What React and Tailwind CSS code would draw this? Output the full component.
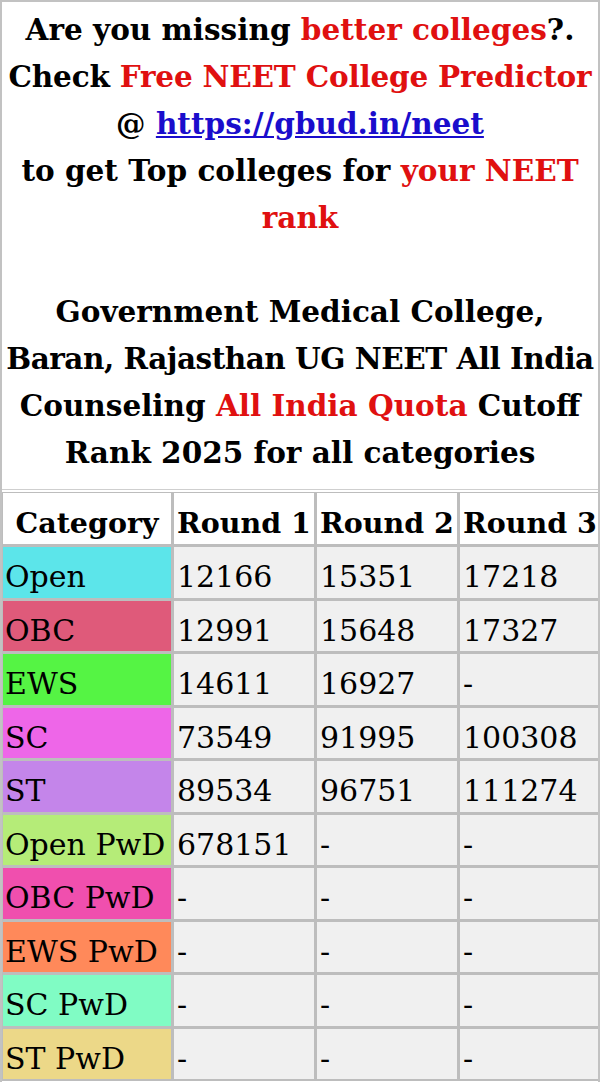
import React from "react";

const rows = [
  ["Open", "bg-[#5ce5ea]", "12166", "15351", "17218"],
  ["OBC", "bg-[#df5a7a]", "12991", "15648", "17327"],
  ["EWS", "bg-[#55f444]", "14611", "16927", "-"],
  ["SC", "bg-[#ee66e8]", "73549", "91995", "100308"],
  ["ST", "bg-[#c485ea]", "89534", "96751", "111274"],
  ["Open PwD", "bg-[#b5ec78]", "678151", "-", "-"],
  ["OBC PwD", "bg-[#f04fae]", "-", "-", "-"],
  ["EWS PwD", "bg-[#ff895a]", "-", "-", "-"],
  ["SC PwD", "bg-[#80fcc4]", "-", "-", "-"],
  ["ST PwD", "bg-[#ecd888]", "-", "-", "-"],
];

function Red({ children }) {
  return <span className="text-[#e01010]">{children}</span>;
}

export default function App() {
  return (
    <div
      className="w-[600px] h-[1082px] overflow-hidden bg-white border-2 border-b-0 border-[#c2c2c2] text-black"
      style={{ fontFamily: '"DejaVu Serif", "Liberation Serif", serif' }}
    >
      <div className="pt-[4px] pb-[13px] border-b border-[#cfcfcf] text-center font-bold text-[29.5px] leading-[47px]">
        <div className="whitespace-nowrap">
          Are you missing <Red>better colleges</Red>?.
        </div>
        <div className="whitespace-nowrap tracking-[-0.2px]">
          Check <Red>Free NEET College Predictor</Red>
        </div>
        <div className="whitespace-nowrap">
          @{" "}
          <a href="https://gbud.in/neet" className="text-[#1a0dcc] underline">
            https://gbud.in/neet
          </a>
        </div>
        <div className="whitespace-nowrap">
          to get Top colleges for <Red>your NEET</Red>
        </div>
        <div>
          <Red>rank</Red>
        </div>
        <div>&nbsp;</div>
        <div className="whitespace-nowrap">Government Medical College,</div>
        <div className="whitespace-nowrap tracking-[-0.5px]">Baran, Rajasthan UG NEET All India</div>
        <div className="whitespace-nowrap">
          Counseling <Red>All India Quota</Red> Cutoff
        </div>
        <div className="whitespace-nowrap">Rank 2025 for all categories</div>
      </div>

      <div className="mt-[2px] grid grid-cols-[168px_140px_140px_140px] gap-[3px] bg-[#bdbdbd] p-[1px] pb-[2px] text-[30px] leading-none">
        {["Category", "Round 1", "Round 2", "Round 3"].map((h) => (
          <div
            key={h}
            className="h-[51px] pt-[10px] bg-white flex items-center justify-center font-bold text-[28.5px] whitespace-nowrap"
          >
            {h}
          </div>
        ))}
        {rows.map(([name, color, r1, r2, r3]) => (
          <React.Fragment key={name}>
            <div className={`h-[50.5px] pt-[10px] ${color} flex items-center pl-[2px] whitespace-nowrap`}>
              {name}
            </div>
            {[r1, r2, r3].map((v, i) => (
              <div
                key={i}
                className="h-[50.5px] pt-[10px] bg-[#f0f0f0] flex items-center pl-[3px] whitespace-nowrap"
              >
                {v}
              </div>
            ))}
          </React.Fragment>
        ))}
      </div>
    </div>
  );
}
